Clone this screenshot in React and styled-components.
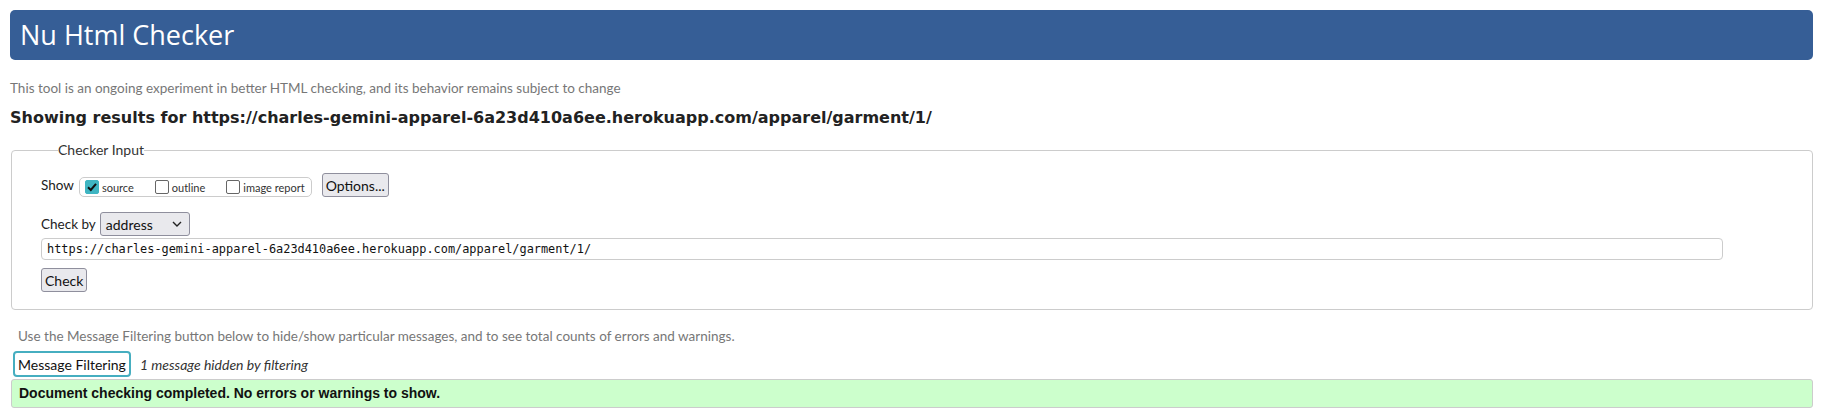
import React from 'react'
import styled, { createGlobalStyle } from 'styled-components'

const Global = createGlobalStyle`
  html, body { margin: 0; padding: 0; background: #fff; }
  body { font-family: Lato, 'Open Sans', sans-serif; color: #222; }
`

const App = () => {
  const url = 'https://charles-gemini-apparel-6a23d410a6ee.herokuapp.com/apparel/garment/1/'
  return (
    <Page>
      <Global />
      <Header>Nu Html Checker</Header>
      <Intro>This tool is an ongoing experiment in better HTML checking, and its behavior remains subject to change</Intro>
      <Results>Showing results for {url}</Results>

      <Fieldset>
        <Legend>Checker Input</Legend>
        <Row>
          <Label>Show</Label>
          <OptionsGroup>
            <Check>
              <Box checked>
                <svg width='12' height='12' viewBox='0 0 12 12'>
                  <path d='M2 6.2 L4.8 9 L10 2.8' fill='none' stroke='#111' strokeWidth='2' />
                </svg>
              </Box>
              source
            </Check>
            <Check>
              <Box />
              outline
            </Check>
            <Check>
              <Box />
              image report
            </Check>
          </OptionsGroup>
          <Button>Options...</Button>
        </Row>
        <Row $tight>
          <Label>Check by</Label>
          <Select>
            address
            <svg width='10' height='6' viewBox='0 0 10 6'>
              <path d='M1 1 L5 5 L9 1' fill='none' stroke='#222' strokeWidth='1.4' />
            </svg>
          </Select>
        </Row>
        <UrlInput>{url}</UrlInput>
        <Button>Check</Button>
      </Fieldset>

      <Hint>Use the Message Filtering button below to hide/show particular messages, and to see total counts of errors and warnings.</Hint>
      <FilterRow>
        <FilterButton>Message Filtering</FilterButton>
        <Hidden>1 message hidden by filtering</Hidden>
      </FilterRow>
      <Success>Document checking completed. No errors or warnings to show.</Success>
    </Page>
  )
}

export default App

// STYLING
const Page = styled.div`
  width: 1825px;
  height: 415px;
  padding: 10px 12px 0 10px;
  box-sizing: border-box;
  overflow: hidden;
`

const Header = styled.h1`
  margin: 0;
  height: 50px;
  background: #365e96;
  border-radius: 5px;
  color: #fff;
  font-family: 'Open Sans', sans-serif;
  font-weight: 400;
  font-size: 27px;
  line-height: 50px;
  padding-left: 10px;
`

const Intro = styled.p`
  margin: 18px 0 0;
  font-size: 13.5px;
  line-height: 20px;
  color: #777;
`

const Results = styled.h2`
  margin: 8px 0 0;
  font-family: 'DejaVu Sans', sans-serif;
  font-weight: 700;
  font-size: 16px;
  line-height: 24px;
  color: #222;
`

const Fieldset = styled.fieldset`
  margin: 11px 0 0 1px;
  padding: 14px 0 17px 29px;
  border: 1px solid #ccc;
  border-radius: 4px;
  box-sizing: border-box;
`

const Legend = styled.legend`
  margin-left: 17px;
  padding: 0;
  font-size: 14px;
  color: #333;
  line-height: 18px;
`

const Row = styled.div`
  display: flex;
  align-items: center;
  gap: 4px;
  height: 24px;
  margin-bottom: ${p => (p.$tight ? '2px' : '15px')};
`

const Label = styled.span`
  font-size: 13.5px;
  color: #222;
`

const OptionsGroup = styled.div`
  display: flex;
  align-items: center;
  height: 20px;
  margin-top: 4px;
  border: 1px solid #ccc;
  border-radius: 5px;
  padding: 0 6px 0 5px;
  gap: 21px;
  box-sizing: border-box;
  margin: 4px 6px 0 1px;
`

const Check = styled.label`
  display: flex;
  align-items: center;
  gap: 3px;
  font-size: 11px;
  color: #333;
`

const Box = styled.span`
  width: 14px;
  height: 14px;
  box-sizing: border-box;
  border-radius: 2px;
  border: 1px solid ${p => (p.checked ? '#3fb5c2' : '#666')};
  background: ${p => (p.checked ? '#3fb5c2' : '#fff')};
  display: flex;
  align-items: center;
  justify-content: center;
`

const Button = styled.button`
  font-family: Lato, sans-serif;
  font-size: 14px;
  color: #111;
  height: 24px;
  padding: 0 3px;
  background: #e9e9ed;
  border: 1px solid #8f8f9d;
  border-radius: 3px;
  align-self: flex-start;
`

const Select = styled.div`
  width: 90px;
  height: 24px;
  box-sizing: border-box;
  display: flex;
  align-items: center;
  justify-content: space-between;
  padding: 0 7px 0 5px;
  background: #e9e9ed;
  border: 1px solid #8f8f9d;
  border-radius: 3px;
  font-size: 14px;
  color: #111;
`

const UrlInput = styled.div`
  width: 1682px;
  height: 22px;
  box-sizing: border-box;
  border: 1px solid #ccc;
  border-radius: 4px;
  padding-left: 5px;
  font-family: 'DejaVu Sans Mono', monospace;
  font-size: 11.9px;
  line-height: 20px;
  color: #111;
  margin-bottom: 8px;
`

const Hint = styled.p`
  margin: 16px 0 0 8px;
  font-size: 13.5px;
  line-height: 20px;
  color: #777;
`

const FilterRow = styled.div`
  display: flex;
  align-items: center;
  gap: 9px;
  margin: 5px 0 2px 3px;
`

const FilterButton = styled.button`
  font-family: Lato, sans-serif;
  font-size: 14px;
  height: 26px;
  padding: 0 3px;
  background: #fff;
  color: #111;
  border: 2px solid #46aec0;
  border-radius: 4px;
`

const Hidden = styled.em`
  font-size: 14px;
  color: #333;
`

const Success = styled.div`
  margin-left: 1px;
  height: 29px;
  box-sizing: border-box;
  background: #ccffcc;
  border: 1px solid #ccc;
  border-radius: 3px;
  padding-left: 7px;
  font-family: 'Liberation Sans', Arial, sans-serif;
  font-weight: 700;
  font-size: 14px;
  line-height: 27px;
  color: #111;
`
